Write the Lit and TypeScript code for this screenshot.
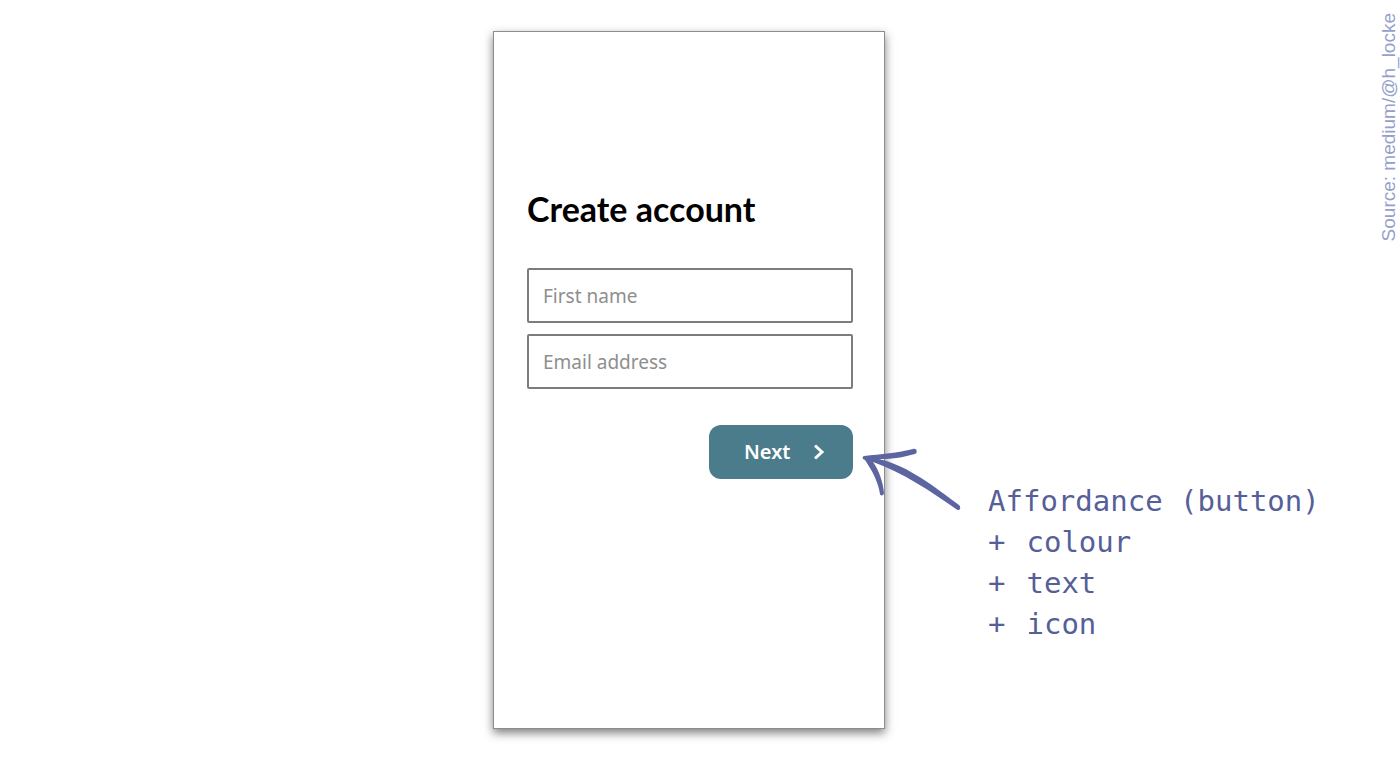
import { LitElement, html, css } from "lit";
import { customElement } from "lit/decorators.js";

@customElement("signup-screen")
class SignupScreen extends LitElement {
  static styles = css`
    :host {
      display: block;
      box-sizing: border-box;
      padding: 153px 31px 32px 33px;
      background: #fff;
      border: 1px solid #8c8c8c;
      box-shadow: 0 4px 9px rgba(0, 0, 0, 0.5);
      font-family: Lato, "Noto Sans", sans-serif;
    }
    .title {
      margin: 0 0 35px;
      font-size: 34px;
      line-height: 48px;
      font-weight: 700;
      color: #000;
      white-space: nowrap;
    }
    .form {
      display: flex;
      flex-direction: column;
      gap: 11px;
    }
    .field {
      display: block;
      box-sizing: border-box;
      width: 100%;
      height: 55px;
      margin: 0;
      padding: 0 14px;
      border: 2px solid #7c7c7c;
      border-radius: 2px;
      background: #fff;
      font: 400 19px/28px "Noto Sans", sans-serif;
      color: #333;
    }
    .field::placeholder {
      color: #8e8e8e;
      opacity: 1;
    }
    .next {
      display: flex;
      align-items: center;
      justify-content: space-between;
      align-self: flex-end;
      box-sizing: border-box;
      width: 144px;
      height: 54px;
      margin: 25px 0 0;
      padding: 0 28px 0 35px;
      border: 0;
      border-radius: 12px;
      background: #4b7c8b;
      color: #fff;
      font: 600 20px/28px "Noto Sans", sans-serif;
    }
    .chevron {
      display: block;
      width: 12px;
      height: 16px;
    }
  `;

  render() {
    return html`
      <h1 class="title">Create account</h1>
      <form class="form" @submit=${(e: Event) => e.preventDefault()}>
        <input class="field" type="text" name="name" aria-label="First name" placeholder="First name" />
        <input class="field" type="email" name="email" aria-label="Email address" placeholder="Email address" />
        <button class="next" type="submit">
          Next
          <svg class="chevron" viewBox="0 0 12 16" fill="none" stroke="#fff" stroke-width="3" aria-hidden="true">
            <path d="M2 1.5 L9 8 L2 14.5" />
          </svg>
        </button>
      </form>
    `;
  }
}

@customElement("app-root")
class AppRoot extends LitElement {
  static styles = css`
    :host {
      display: flex;
      min-height: 100vh;
      background: #fff;
    }
    .stage {
      flex: 1;
      display: grid;
      grid-template-columns: 1fr 392px 1fr;
      padding: 31px 0 44px;
    }
    .screen {
      grid-column: 2;
    }
    .note {
      position: relative;
      margin: 450px 0 0;
      padding-left: 103px;
      color: #565f98;
      font: 400 29px/41px "DejaVu Sans Mono", monospace;
      white-space: nowrap;
    }
    .line {
      margin: 0;
    }
    .list {
      margin: 0;
      padding: 0;
      list-style: none;
    }
    .item {
      display: flex;
      gap: 21px;
    }
    .arrow {
      position: absolute;
      left: -25px;
      top: -37px;
      width: 104px;
      height: 70px;
    }
    .source {
      width: 22px;
      padding-top: 13px;
      box-sizing: border-box;
    }
    .credit {
      display: block;
      writing-mode: vertical-rl;
      transform: rotate(180deg);
      font: 400 19px/22px "Liberation Sans", sans-serif;
      color: #959fcb;
      white-space: nowrap;
    }
  `;

  render() {
    return html`
      <main class="stage">
        <signup-screen class="screen"></signup-screen>
        <aside class="note">
          <svg class="arrow" viewBox="860 444 104 70" aria-hidden="true" fill="#5c65a0">
            <path
              d="M864 456 C881 454 898 453 913 449 C917 448 918 453 915 454 C904 457 894 459 879 459 C909 466 936 488 959 505 C962 508 959 512 956 509 C932 492 902 472 873 462 C879 470 883 482 884 493 C884 496 880 496 880 494 C878 482 873 472 865 460 C862 459 862 457 864 456 Z"
            />
          </svg>
          <p class="line">Affordance (button)</p>
          <ul class="list">
            ${["colour", "text", "icon"].map(
              (cue) => html`<li class="item"><span>+</span><span>${cue}</span></li>`
            )}
          </ul>
        </aside>
      </main>
      <footer class="source"><span class="credit">Source: medium/@h_locke</span></footer>
    `;
  }
}
